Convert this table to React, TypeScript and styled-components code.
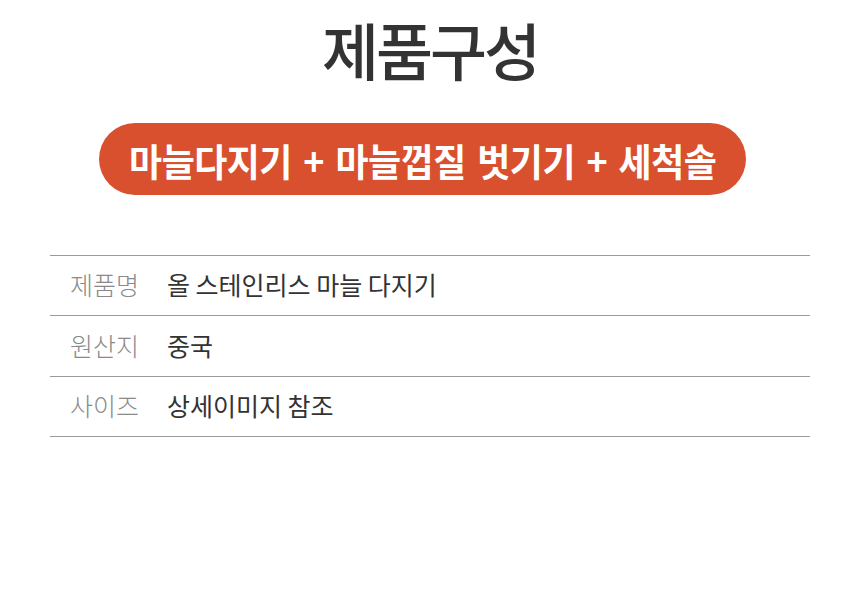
import React from 'react';
import styled, { createGlobalStyle } from 'styled-components';

const Global = createGlobalStyle`
	body {
		margin: 0;
		background: #fff;
		font-family: 'Noto Sans CJK KR', 'Noto Sans', sans-serif;
	}
`;

const Page = styled.div`
	width: 860px;
	height: 598px;
	display: flex;
	flex-direction: column;
	align-items: center;
	padding-top: 8px;
	box-sizing: border-box;
`;

const Title = styled.h1`
	margin: 0;
	height: 84px;
	line-height: 82px;
	font-size: 62px;
	font-weight: 500;
	color: #333;
	letter-spacing: -3px;
`;

const Pill = styled.div`
	margin-top: 31px;
	margin-right: 15px;
	width: 647px;
	height: 72px;
	border-radius: 36px;
	background: #d9502f;
	display: flex;
	align-items: center;
	justify-content: center;
`;

const PillText = styled.span`
	display: inline-block;
	color: #fff;
	font-size: 38px;
	font-weight: 700;
	white-space: nowrap;
	transform: scaleX(0.945);
	letter-spacing: -0.5px;
	word-spacing: 4px;
`;

const Table = styled.div`
	margin-top: 60px;
	width: 760px;
	border-top: 1px solid #9a9a9a;
`;

const Row = styled.div<{ $h: number }>`
	display: flex;
	align-items: center;
	height: ${(p) => p.$h}px;
	padding-bottom: 3px;
	box-sizing: border-box;
	border-bottom: 1px solid #9a9a9a;
	font-size: 25px;
`;

const Label = styled.div`
	width: 117px;
	padding-left: 20px;
	box-sizing: border-box;
	color: #8a8a8a;
	font-weight: 300;
`;

const Value = styled.div`
	color: #333;
	font-weight: 400;
`;

const rows = [
	{ label: '제품명', value: '올 스테인리스 마늘 다지기', h: 60 },
	{ label: '원산지', value: '중국', h: 61 },
	{ label: '사이즈', value: '상세이미지 참조', h: 60 },
];

const App = () => {
	return (
		<>
			<Global />
			<Page>
				<Title>제품구성</Title>
				<Pill>
					<PillText>마늘다지기 + 마늘껍질 벗기기 + 세척솔</PillText>
				</Pill>
				<Table>
					{rows.map((r) => (
						<Row key={r.label} $h={r.h}>
							<Label>{r.label}</Label>
							<Value>{r.value}</Value>
						</Row>
					))}
				</Table>
			</Page>
		</>
	);
};

export default App;
